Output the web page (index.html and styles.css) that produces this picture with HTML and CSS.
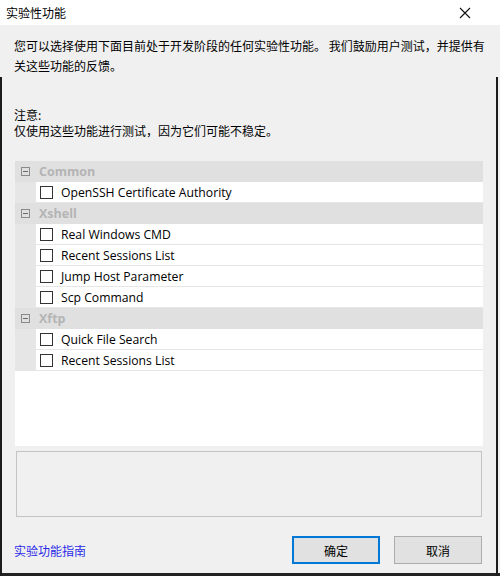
FILE: index.html
```html
<!DOCTYPE html>
<html lang="zh-CN">
<head>
<meta charset="utf-8">
<title>实验性功能</title>
<link rel="stylesheet" href="styles.css">
</head>
<body>
<div class="window">
  <div class="titlebar">
    <span class="title">实验性功能</span>
    <svg class="close" width="12" height="12" viewBox="0 0 12 12"><path d="M1 1L11 11M11 1L1 11" stroke="#111" stroke-width="1.1" fill="none"/></svg>
  </div>
  <div class="content">
    <p class="intro">您可以选择使用下面目前处于开发阶段的任何实验性功能。 我们鼓励用户测试，并提供有关这些功能的反馈。</p>
    <p class="note">注意:<br>仅使用这些功能进行测试，因为它们可能不稳定。</p>
    <div class="list">
      <div class="group"><span class="minus"></span><span class="glabel">Common</span></div>
      <div class="item"><span class="check"></span><span>OpenSSH Certificate Authority</span></div>
      <div class="group"><span class="minus"></span><span class="glabel">Xshell</span></div>
      <div class="item"><span class="check"></span><span>Real Windows CMD</span></div>
      <div class="item"><span class="check"></span><span>Recent Sessions List</span></div>
      <div class="item"><span class="check"></span><span>Jump Host Parameter</span></div>
      <div class="item"><span class="check"></span><span>Scp Command</span></div>
      <div class="group"><span class="minus"></span><span class="glabel">Xftp</span></div>
      <div class="item"><span class="check"></span><span>Quick File Search</span></div>
      <div class="item"><span class="check"></span><span>Recent Sessions List</span></div>
    </div>
    <div class="desc"></div>
    <div class="footer">
      <a class="guide" href="#">实验功能指南</a>
      <div class="buttons">
        <button class="btn primary">确定</button>
        <button class="btn">取消</button>
      </div>
    </div>
  </div>
</div>
</body>
</html>
```
FILE: styles.css
```css
html, body {
  margin: 0;
  padding: 0;
}
body {
  width: 500px;
  height: 576px;
  overflow: hidden;
  background: #f0f0f0;
  font-family: "Noto Sans CJK SC", "Noto Sans", sans-serif;
  color: #000;
  position: relative;
}
body::before {
  content: "";
  position: absolute;
  left: 0;
  top: 77px;
  width: 2px;
  height: 499px;
  background: #1c1c1c;
}
body::after {
  content: "";
  position: absolute;
  right: 2px;
  top: 77px;
  width: 2px;
  height: 499px;
  background: #1c1c1c;
}
.window {
  height: 576px;
  display: flex;
  flex-direction: column;
  border-bottom: 3px solid #222;
  box-sizing: border-box;
}
.titlebar {
  height: 25px;
  background: #fff;
  display: flex;
  align-items: center;
  justify-content: space-between;
  padding: 0 29px 0 6px;
  flex: none;
}
.title {
  font-size: 12px;
  line-height: 16px;
}
.close {
  display: block;
}
.content {
  flex: 1;
  padding: 0 17px 0 14px;
  display: flex;
  flex-direction: column;
}
.intro {
  margin: 11px -8px 0 0;
  font-size: 12px;
  line-height: 20px;
}
.note {
  margin: 31px 0 0;
  font-size: 12px;
  line-height: 16px;
}
.list {
  margin: 22px 0 0 1px;
  height: 285px;
  background: #fff;
  display: flex;
  flex-direction: column;
  flex: none;
}
.group {
  height: 21px;
  background: #e0e0e0;
  display: flex;
  align-items: center;
  flex: none;
}
.minus {
  width: 7px;
  height: 7px;
  border: 1px solid #8a8a8a;
  margin-left: 6px;
  position: relative;
  box-sizing: content-box;
}
.minus::after {
  content: "";
  position: absolute;
  left: 1px;
  right: 1px;
  top: 3px;
  height: 1px;
  background: #6a6a6a;
}
.glabel {
  margin-left: 9px;
  font-family: "Open Sans", "Noto Sans", sans-serif;
  font-weight: 700;
  font-size: 12.5px;
  color: #b4b4b4;
}
.item {
  height: 20px;
  margin-left: 21px;
  border-bottom: 1px solid #e6e6e6;
  display: flex;
  align-items: center;
  font-family: "Open Sans", "Noto Sans", sans-serif;
  font-size: 12.2px;
  color: #000;
  flex: none;
  position: relative;
}
.item::before {
  content: "";
  position: absolute;
  left: -21px;
  top: 0;
  bottom: -1px;
  width: 21px;
  background: #e6e6e6;
}
.check {
  width: 11px;
  height: 11px;
  border: 1px solid #333;
  background: #fff;
  margin: 0 8px 0 4px;
  flex: none;
}
.desc {
  margin: 5px 0 0 2px;
  width: 464px;
  height: 64px;
  border: 1px solid #c4c4c4;
  flex: none;
}
.footer {
  display: flex;
  justify-content: space-between;
  align-items: center;
  margin-top: 19px;
}
.guide {
  font-size: 12px;
  color: #2a2ae8;
  text-decoration: none;
}
.buttons {
  display: flex;
  gap: 14px;
  margin-right: 1px;
}
.btn {
  width: 88px;
  height: 28px;
  background: #e1e1e1;
  border: 1px solid #adadad;
  font-family: "Noto Sans CJK SC", sans-serif;
  font-size: 12px;
  color: #000;
  padding: 0;
}
.btn.primary {
  border: 2px solid #0078d7;
}
```
